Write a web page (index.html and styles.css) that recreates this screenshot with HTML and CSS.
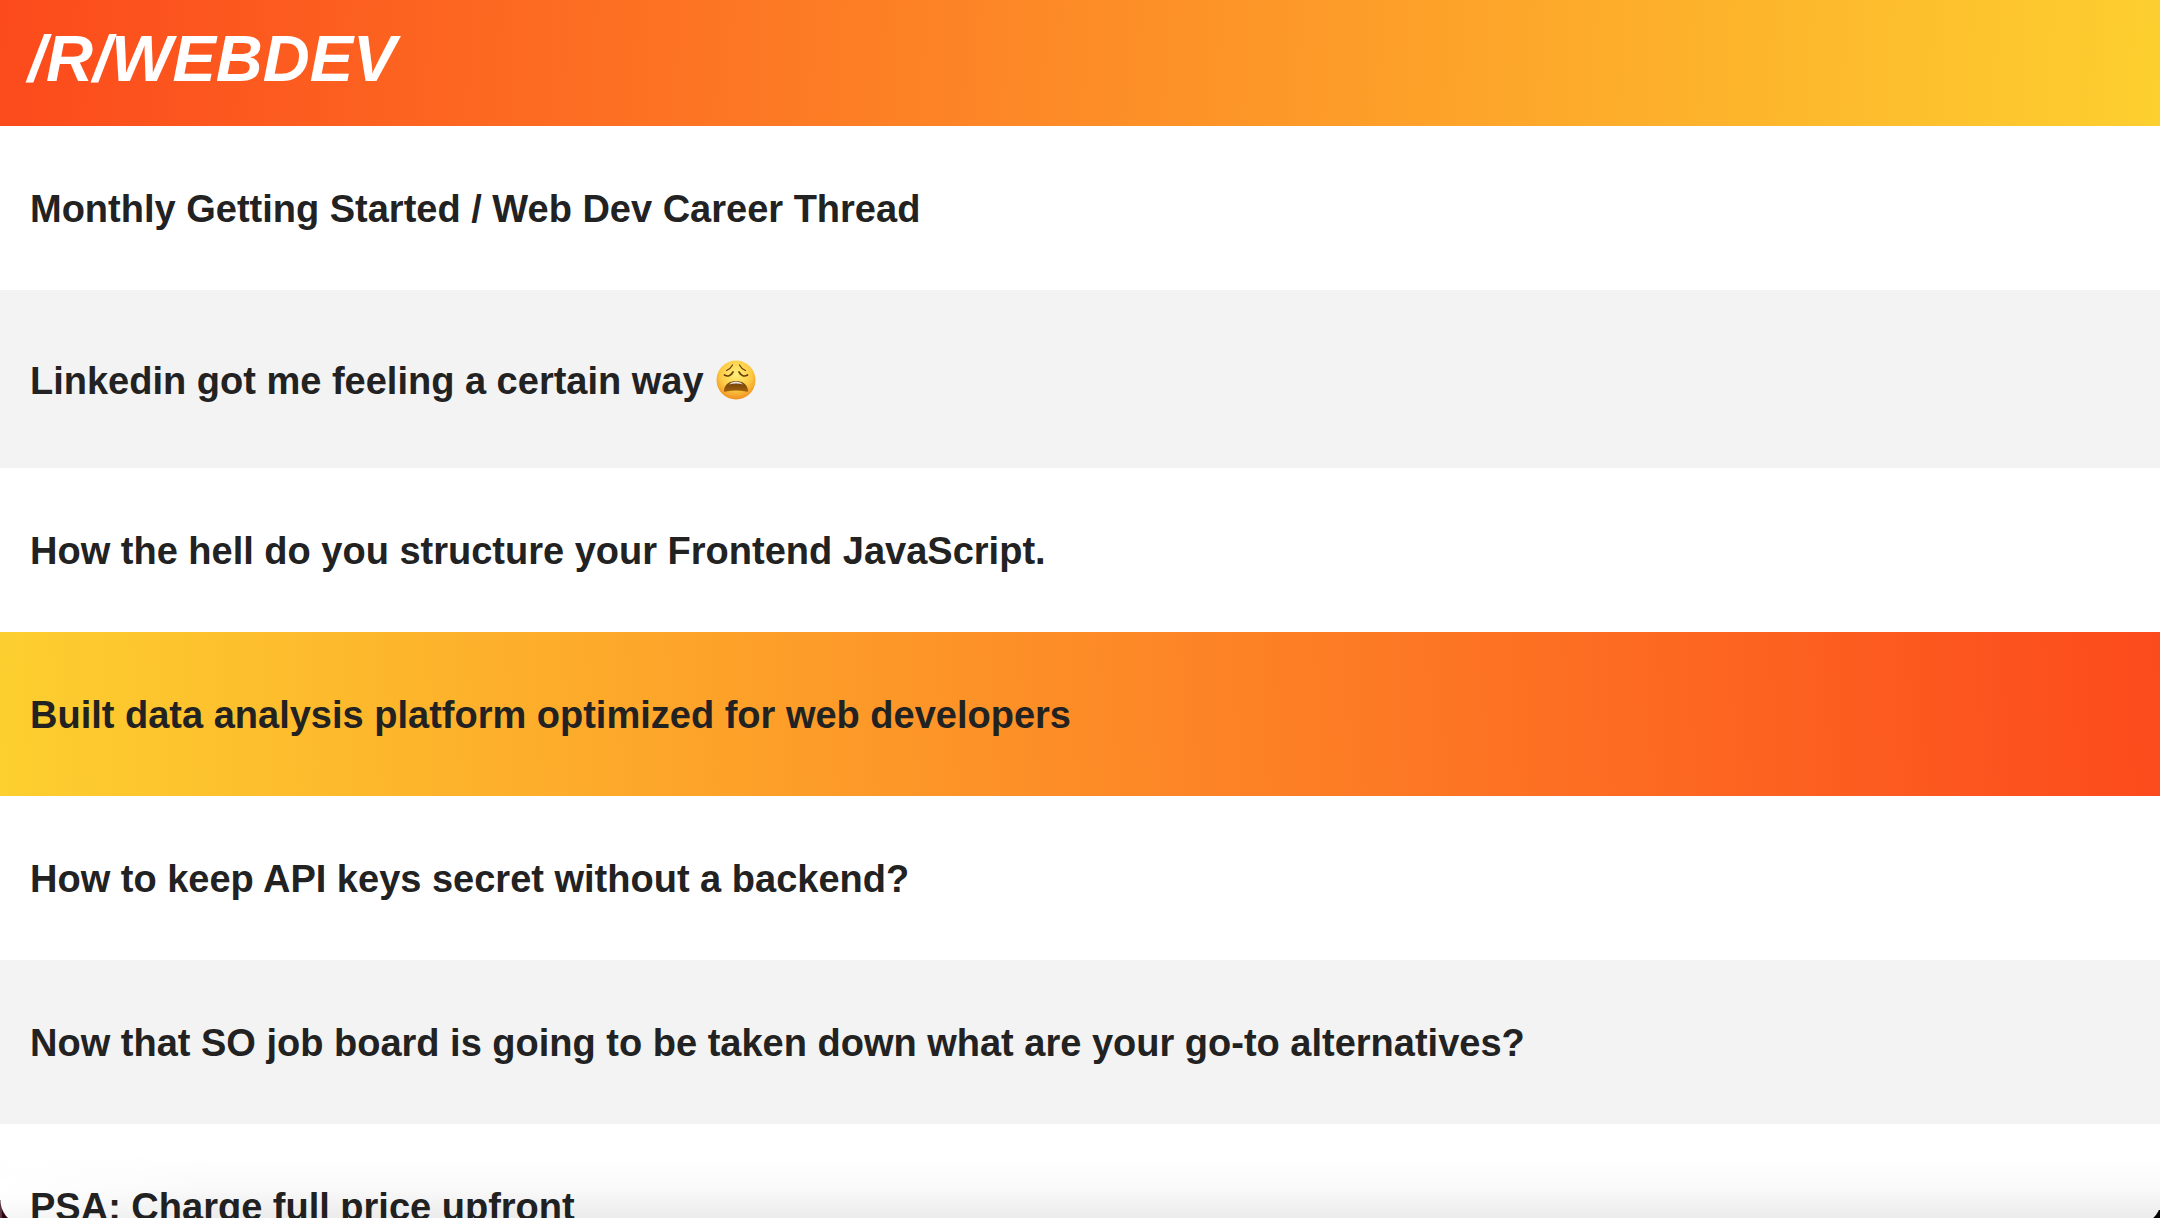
FILE: index.html
```html
<!DOCTYPE html>
<html lang="en">
<head>
<meta charset="utf-8">
<title>/r/webdev</title>
<link rel="stylesheet" href="styles.css">
</head>
<body>
<header class="header"><h1 class="title">/r/webdev</h1></header>
<main class="posts">
<h2 class="post">Monthly Getting Started / Web Dev Career Thread</h2>
<h2 class="post post-tall">Linkedin got me feeling a certain way <svg class="emoji" viewBox="0 0 40 40" role="img" aria-label="Weary face">
<defs>
<radialGradient id="face" cx=".5" cy=".35" r=".65"><stop offset="0" stop-color="#fff07a"/><stop offset=".6" stop-color="#fdcb45"/><stop offset="1" stop-color="#f08f20"/></radialGradient>
<linearGradient id="mouth" x1="0" y1="0" x2="0" y2="1"><stop offset="0" stop-color="#6b3b08"/><stop offset="1" stop-color="#a0620f"/></linearGradient>
</defs>
<circle cx="20" cy="20" r="19.5" fill="url(#face)"/>
<g fill="none" stroke="#6b3b08" stroke-linecap="round">
<path d="M10.500 10.500Q14.500 9 16.500 5M29.500 10.500Q25.500 9 23.500 5" stroke-width="1.200"/>
<path d="M8.500 15Q13.500 18 17 12M31.500 15Q26.500 18 23 12" stroke-width="1.700"/>
</g>
<path d="M8 31C8 25 13 21 20 21s12 4 12 10c0 1-1 1-2 .6q-10-2-20 0C9 32 8 32 8 31z" fill="url(#mouth)"/>
<path d="M12.500 24.500Q16 21.500 20 21.500t7.500 3Q20 22.500 12.500 24.500z" fill="#e6e3df"/>
</svg></h2>
<h2 class="post">How the hell do you structure your Frontend JavaScript.</h2>
<h2 class="post post-active">Built data analysis platform optimized for web developers</h2>
<h2 class="post">How to keep API keys secret without a backend?</h2>
<h2 class="post">Now that SO job board is going to be taken down what are your go-to alternatives?</h2>
<h2 class="post">PSA: Charge full price upfront</h2>
</main>
<div class="window-edge"></div>
</body>
</html>
```

FILE: styles.css
```css
body {
  margin: 0;
  height: 100vh;
  overflow: hidden;
  background: #fff;
  color: #222;
  font-family: "Liberation Sans", Arial, sans-serif;
}

.header {
  background: linear-gradient(93deg, #fc4a1c, #fd8526 45%, #fdcf2f);
}

.title {
  margin: 0;
  padding: 20px 28px 28px;
  color: #fff;
  font-size: 65px;
  font-style: italic;
  line-height: 78px;
  text-transform: uppercase;
}

.post {
  margin: 0;
  padding: 61px 30px 59px;
  font-size: 38px;
  line-height: 44px;
}

.post:nth-child(even) {
  background: #f3f3f3;
}

.post-tall {
  padding: 69px 30px 65px;
}

.post.post-active {
  background: linear-gradient(267deg, #fc4a1c, #fd8526 45%, #fdcf2f);
}

.emoji {
  width: 40px;
  height: 40px;
  margin: 0 2px;
  vertical-align: -6px;
}

/* Rounded bottom edge of the window, with its shading */
.window-edge {
  position: fixed;
  inset: 0;
  pointer-events: none;
  box-shadow: inset 2px 0 rgba(255, 255, 255, .2);
  background:
    radial-gradient(circle at 26px 0, transparent 25px, #300012 26px) left bottom / 8px 18px no-repeat,
    radial-gradient(circle at -20px -12px, transparent 28px, #000 29px) right bottom / 7px 8px no-repeat,
    radial-gradient(ellipse 220px 64px at 0 50%, #fff, transparent) left bottom / 220px 64px no-repeat,
    linear-gradient(to top, rgba(0, 0, 0, .08), rgba(0, 0, 0, .025) 45%, transparent) left bottom / 100% 62px no-repeat;
}

.window-edge {
  mix-blend-mode: multiply;
}
```
